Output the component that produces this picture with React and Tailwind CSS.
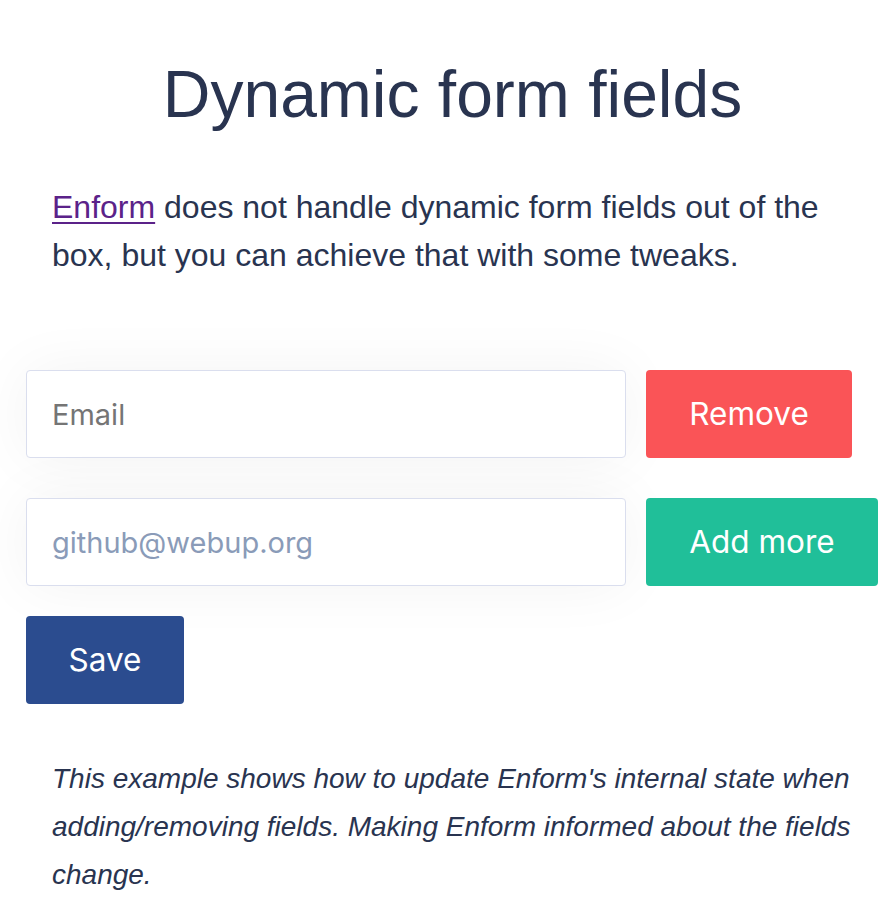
import React from "react";

export default function App() {
  return (
    <div className="min-h-[916px] w-[890px] bg-white text-[#293450]" style={{ fontFamily: '"Liberation Sans", Arial, sans-serif' }}>
      <div className="pt-[56px]">
        <h1 className="text-center pl-[15px] text-[66px] leading-[76px] font-normal">Dynamic form fields</h1>
        <p className="mt-[51px] pl-[52px] pr-[40px] text-[32px] leading-[48px]">
          <a href="#" className="text-[#5b2289] underline decoration-[2px] underline-offset-[4px]">Enform</a> does not handle dynamic form fields out of the box, but you can achieve that with some tweaks.
        </p>
        <form className="mt-[91px] px-[26px] flex flex-col" style={{ fontFamily: 'Inter, "Noto Sans", sans-serif' }} onSubmit={(e) => e.preventDefault()}>
          <div className="flex gap-[20px]">
            <input
              placeholder="Email"
              className="w-[600px] shrink-0 h-[88px] rounded-[4px] border border-[#dadeee] bg-white px-[25px] text-[29px] text-[#293450] placeholder:text-[#757575] outline-none shadow-[0_0_60px_rgba(20,20,40,0.05)]"
            />
            <button type="button" className="h-[88px] w-[206px] shrink-0 whitespace-nowrap rounded-[4px] bg-[#fa5457] text-white text-[31.5px]">Remove</button>
          </div>
          <div className="flex gap-[20px] mt-[40px]">
            <input
              defaultValue="github@webup.org"
              className="w-[600px] shrink-0 h-[88px] rounded-[4px] border border-[#dadeee] bg-white px-[25px] text-[29px] text-[#8a9bb8] outline-none shadow-[0_0_60px_rgba(20,20,40,0.05)]"
            />
            <button type="button" className="h-[88px] w-[232px] shrink-0 whitespace-nowrap rounded-[4px] bg-[#20bf99] text-white text-[31.5px]">Add more</button>
          </div>
          <div className="mt-[30px]">
            <button type="submit" className="h-[88px] w-[158px] whitespace-nowrap rounded-[4px] bg-[#2b4c8f] text-white text-[31.5px]">Save</button>
          </div>
        </form>
        <p className="mt-[51px] pl-[52px] pr-[26px] text-[28px] leading-[48px] italic">
          This example shows how to update Enform's internal state when adding/removing fields. Making Enform informed about the fields change.
        </p>
      </div>
    </div>
  );
}
